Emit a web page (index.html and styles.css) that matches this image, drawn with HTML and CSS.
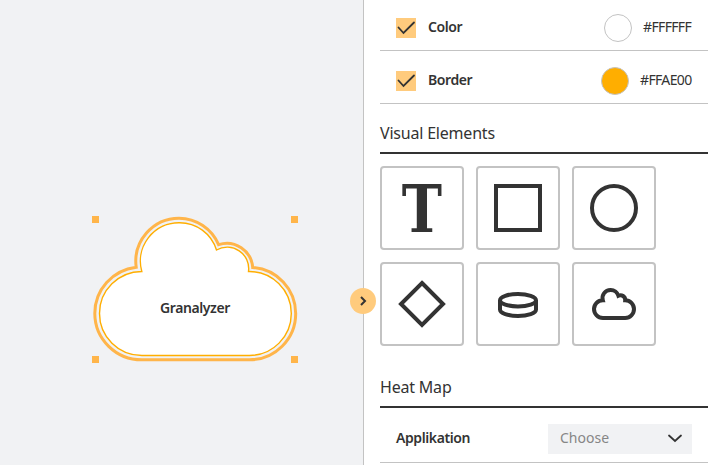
FILE: index.html
```html
<!DOCTYPE html>
<html lang="en">
<head>
<meta charset="utf-8">
<title>Granalyzer</title>
<link rel="stylesheet" href="styles.css">
</head>
<body>
<main class="app">
  <section class="canvas">
    <svg class="node" width="212" height="160" viewBox="89 209 212 160">
      <path class="node-outline" d="M136.200 267.300A43.300 43.300 0 0 1 179 218.200A43.300 43.300 0 0 1 218.600 244.700A26 26 0 0 1 252.700 267.500A46.300 46.300 0 0 1 295.700 313.500A46.300 46.300 0 0 1 249.500 359.800H142A47 46.500 0 0 1 94.800 313.500A47 46.500 0 0 1 136.200 267.300Z"/>
      <path class="node-shape" d="M141.800 271.500A38.500 38.500 0 0 1 179 222.700A38.500 38.500 0 0 1 216.500 250A21.500 21.500 0 0 1 248.500 271.500A42 42 0 0 1 291.300 313.500A42 42 0 0 1 249.500 355.500H142A42.500 42 0 0 1 99.500 313.500A42.500 42 0 0 1 141.800 271.500Z"/>
      <path class="handle" d="M92 216h7v7h-7zM291 216h7v7h-7zM92 356h7v7h-7zM291 356h7v7h-7z"/>
    </svg>
    <span class="node-label">Granalyzer</span>
  </section>
  <aside class="panel">
    <button class="toggle" aria-label="Collapse"><svg width="26" height="26"><path d="M11 9l4 4-4 4"/></svg></button>
    <div class="row first">
      <span class="check"><svg width="20" height="20"><path d="M2.500 9.500l5 5.500L18 4.500"/></svg></span>
      <b class="name">Color</b>
      <i class="swatch white"></i><span class="hex hex-white">#FFFFFF</span>
    </div>
    <div class="row">
      <span class="check"><svg width="20" height="20"><path d="M2.500 9.500l5 5.500L18 4.500"/></svg></span>
      <b class="name">Border</b>
      <i class="swatch orange"></i><span class="hex hex-orange">#FFAE00</span>
    </div>
    <h2 class="heading visual">Visual Elements</h2>
    <div class="tiles">
      <div class="tile"><svg width="80" height="80"><text class="letter" transform="translate(40 64) scale(.82 1)" text-anchor="middle">T</text></svg></div>
      <div class="tile"><svg width="80" height="80"><path d="M18 18h44v44H18z"/></svg></div>
      <div class="tile"><svg width="80" height="80"><circle cx="40" cy="40" r="22"/></svg></div>
      <div class="tile"><svg width="80" height="80"><path d="M40 19L61 40L40 61L19 40Z"/></svg></div>
      <div class="tile"><svg width="80" height="80"><ellipse cx="40" cy="36.200" rx="18" ry="6.200"/><path d="M22 36v9.500c0 3.500 8 6.500 18 6.500s18-3 18-6.500v-9.500"/></svg></div>
      <div class="tile"><svg width="80" height="80"><path d="M28.800 36.200A8 8 0 0 1 36.600 26A8 8 0 0 1 44.400 31.700A4.700 4.700 0 0 1 51.200 36.200A8.900 8.900 0 0 1 60 45.100A8.900 8.900 0 0 1 51.200 54H28.900A8.900 8.900 0 0 1 20 45.100A8.900 8.900 0 0 1 28.800 36.200Z"/></svg></div>
    </div>
    <h2 class="heading heat">Heat Map</h2>
    <div class="row app-row">
      <b class="name">Applikation</b>
      <div class="select"><span>Choose</span><svg width="14" height="10"><path d="M1 2.500l6 5.500 6-5.500"/></svg></div>
    </div>
  </aside>
</main>
</body>
</html>
```

FILE: styles.css
```css
* { box-sizing: border-box; }
body { margin: 0; background: #fff; color: #333; font: 14px/20px "Noto Sans", sans-serif; overflow: hidden; }
.app { display: flex; width: 723px; height: 465px; }
.canvas { position: relative; width: 363px; background: #f1f2f4; }
.node { position: absolute; left: 89px; top: 209px; }
.node-outline { fill: #f1f2f4; stroke: #ffb54a; stroke-width: 3; }
.node-shape { fill: #fff; stroke: #ffae00; stroke-width: 1.4; }
.handle { fill: #ffb54a; }
.node-label { position: absolute; left: 160px; top: 298px; font-weight: 600; letter-spacing: -.4px; }
.panel { position: relative; width: 360px; padding: 0 15px 0 16px; border-left: 1px solid #c3c3c3; }
.toggle { position: absolute; left: -14px; top: 288px; width: 26px; height: 26px; padding: 0; border: 0; border-radius: 50%; background: #ffcb7d; }
svg { display: block; overflow: visible; }
.toggle path, .check path, .select path { fill: none; stroke: #333; stroke-width: 2; }
.check path, .select path { stroke-width: 1.8; stroke-linecap: round; }
.row { display: flex; align-items: center; height: 53px; padding: 8px 16px 0; border-bottom: 1px solid #c3c3c3; }
.first { height: 51px; padding-top: 6px; }
.check { width: 20px; height: 20px; background: #ffcb7d; margin-right: 12px; }
.name { font-weight: 600; letter-spacing: -.4px; margin-top: -2px; }
.swatch { width: 28px; height: 28px; border: 1px solid #c3c3c3; border-radius: 50%; margin: 0 11px 0 auto; }
.white { background: #fff; }
.orange { background: #ffae00; }
.hex { white-space: nowrap; margin-top: -2px; letter-spacing: -.65px; }
.hex-white { width: 49px; }
.hex-orange { width: 52px; }
.heading { margin: 0; height: 50px; padding-top: 18px; border-bottom: 2px solid #333; font-size: 16px; font-weight: 400; line-height: 22px; letter-spacing: -.2px; }
.tiles { display: grid; grid-template-columns: repeat(3, 84px); gap: 12px; padding-top: 12px; }
.tile { height: 84px; border: 2px solid #c3c3c3; border-radius: 4px; }
.tile svg { fill: none; stroke: #333; stroke-width: 4; }
.tile .letter { fill: #333; stroke: none; font: bold 66px "DejaVu Serif", serif; }
.heat { height: 62px; padding-top: 30px; }
.app-row { height: 55px; padding-top: 8px; }
.select { display: flex; align-items: center; justify-content: space-between; width: 144px; height: 30px; margin-left: auto; padding: 0 10px 2px 12px; background: #f1f2f4; color: #868686; }
```
